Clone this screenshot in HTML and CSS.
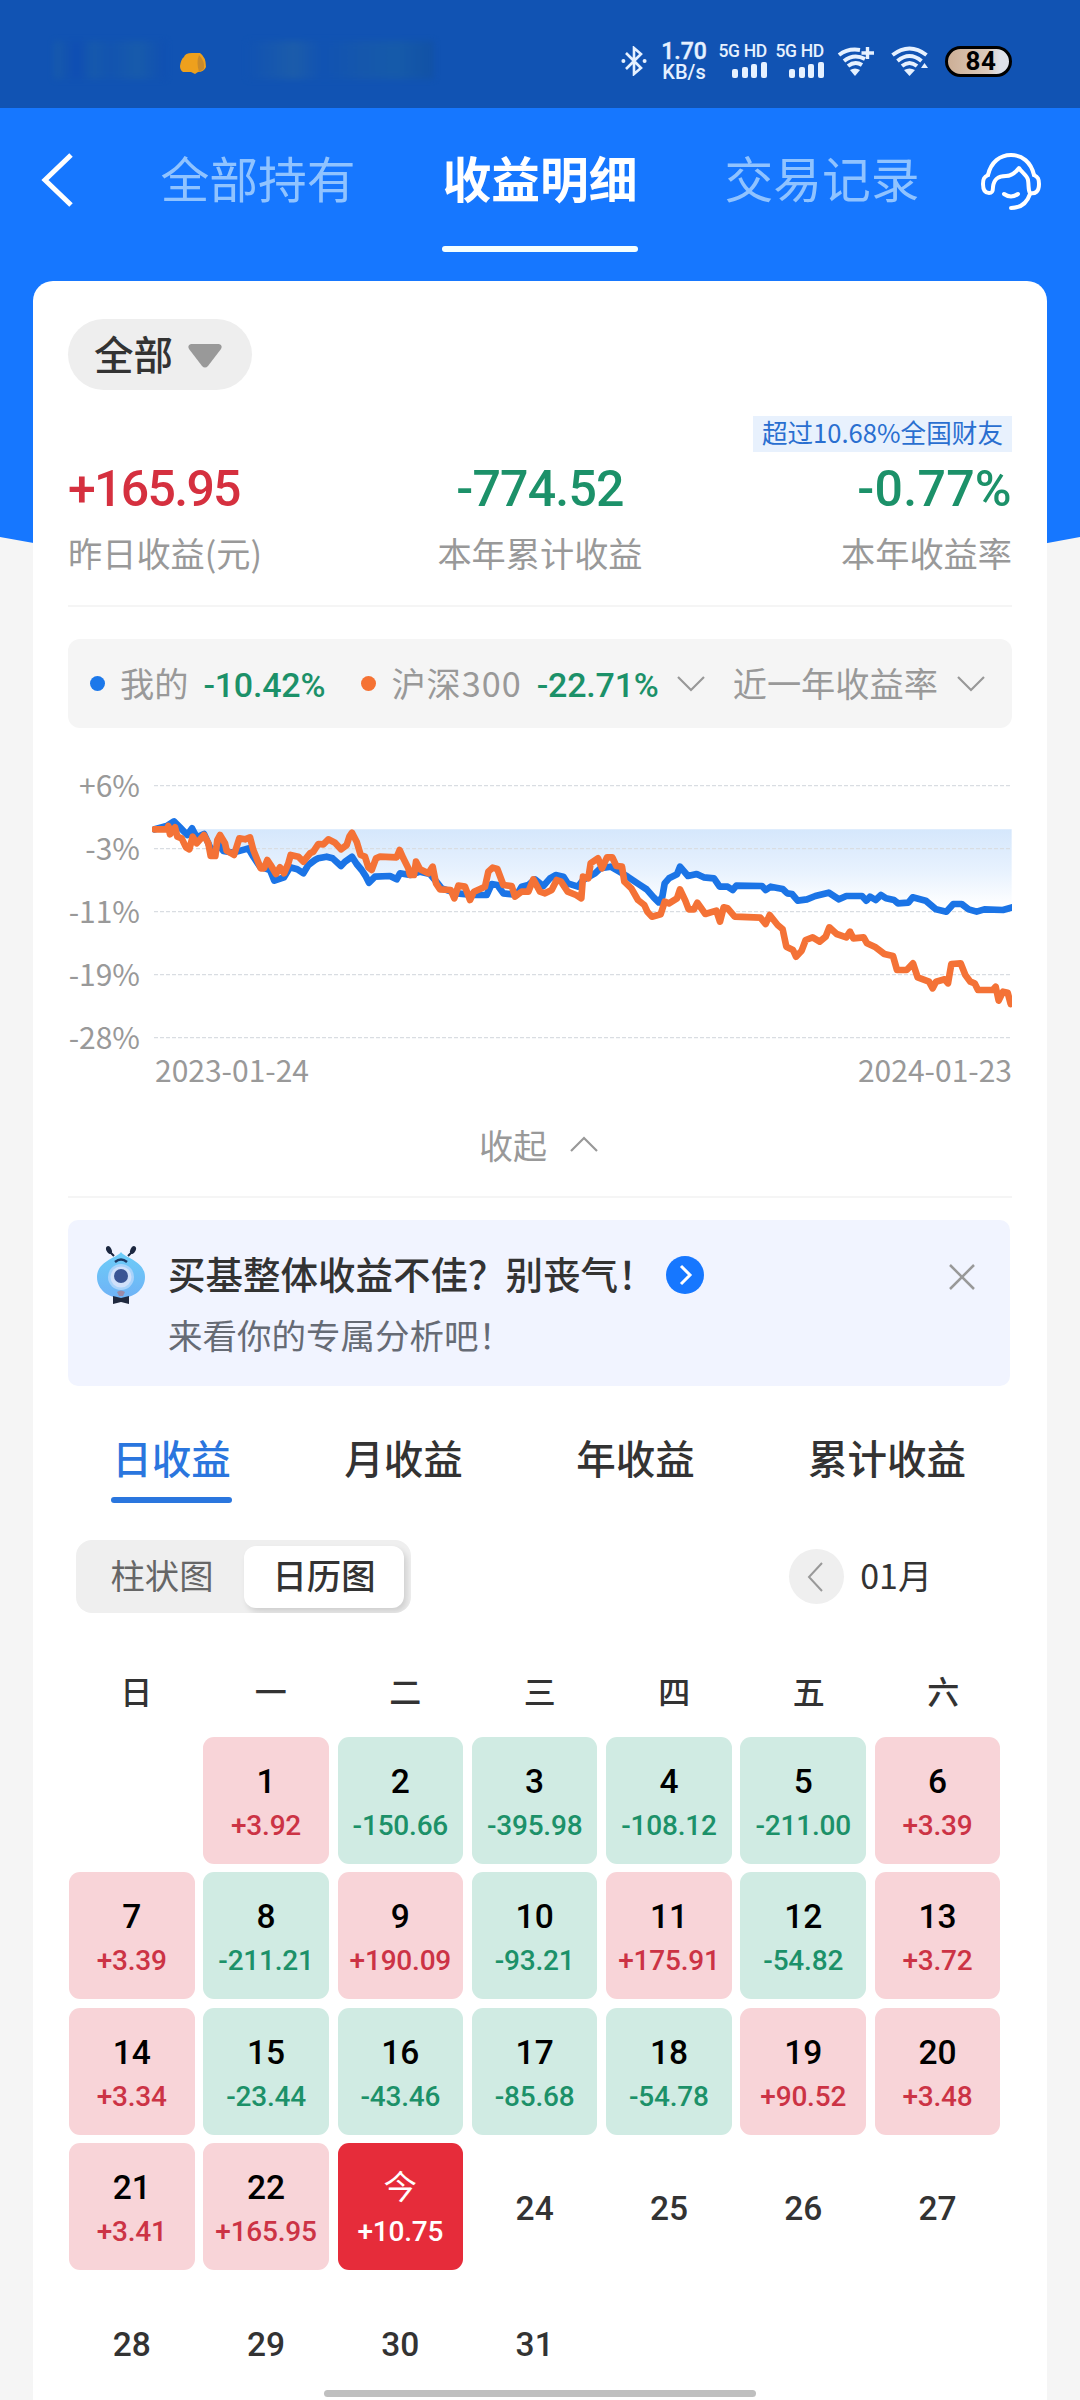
FILE: index.html
```html
<!DOCTYPE html>
<html lang="zh-CN">
<head>
<meta charset="utf-8">
<title>收益明细</title>
<link rel="stylesheet" href="styles.css">
</head>
<body>
<div class="screen">
  <svg class="backdrop" viewBox="0 0 1080 600" aria-hidden="true"><path d="M0 0H1080V537Q540 640 0 537Z" fill="#1677ff"/></svg>

  <header class="status">
    <div class="status-left">
      <span class="smudge smudge-a"></span>
      <svg class="blob" viewBox="0 0 26 21"><path d="M4 4Q5 0 12 0H20Q26 4 26 14Q24 19 18 19L15 21L11 19H3Q0 17 0 13Q1 6 4 4Z" fill="#eea01d"/><path d="M19 2Q25 8 24 16L19 19Q16 9 19 2Z" fill="#c98a2b"/></svg>
      <span class="smudge smudge-b"></span>
    </div>
    <div class="status-right">
      <svg class="bt" viewBox="0 0 26 30" fill="none" stroke="#e6f1ff" stroke-width="2.6"><path d="M5 7L20 22L13 28V2L20 8L5 23"/><circle cx="2.4" cy="15" r="1.2" fill="#e6f1ff" stroke-width="1.6"/><circle cx="23.6" cy="15" r="1.2" fill="#e6f1ff" stroke-width="1.6"/></svg>
      <div class="speed"><b>1.70</b><span>KB/s</span></div>
      <div class="cell"><span>5G HD</span><svg viewBox="0 0 35 16" fill="#e6f1ff"><rect y="7" width="6" height="9" rx="2"/><rect x="10" y="5" width="6" height="11" rx="2"/><rect x="19" y="2" width="6" height="14" rx="2"/><rect x="29" width="6" height="16" rx="2"/></svg></div>
      <div class="cell"><span>5G HD</span><svg viewBox="0 0 35 16" fill="#e6f1ff"><rect y="7" width="6" height="9" rx="2"/><rect x="10" y="5" width="6" height="11" rx="2"/><rect x="19" y="2" width="6" height="14" rx="2"/><rect x="29" width="6" height="16" rx="2"/></svg></div>
      <svg class="wifi" viewBox="0 0 38 30" fill="none" stroke="#e6f1ff" stroke-width="4"><path d="M2 9Q11 2 23 4"/><path d="M7 15Q17 7 28 13"/><path d="M11 20Q18 14.500 25 19"/><path d="M13 24Q18 21 23 24L18 30Z" fill="#e6f1ff" stroke="none"/><path d="M30.500 1V13M24.500 7H37" stroke-width="3.400"/></svg>
      <svg class="wifi wifi-two" viewBox="0 0 38 30" fill="none" stroke="#e6f1ff" stroke-width="4"><path d="M1.500 9Q18.500 -4 35.500 9"/><path d="M6.500 15Q18.500 5 30.500 15"/><path d="M11 20Q18.500 14 26 20"/><path d="M13 24Q18.500 21 24 24L18.500 30Z" fill="#e6f1ff" stroke="none"/><path d="M30 22L33.500 17L37 22Z" fill="#e6f1ff" stroke="none"/></svg>
      <div class="battery">84</div>
    </div>
  </header>

  <nav class="top-nav">
    <svg class="back" viewBox="0 0 32 54" fill="none" stroke="#fff" stroke-width="5"><path d="M30 2L4 27L30 52"/></svg>
    <a class="nav-tab">全部持有</a>
    <a class="nav-tab active">收益明细</a>
    <a class="nav-tab">交易记录</a>
    <svg class="service" viewBox="0 0 60 58" fill="none" stroke="#fff" stroke-width="4" stroke-linecap="round" stroke-linejoin="round"><path d="M7 23C10 10 19 3 30 3S50 10 53 23"/><path d="M7 23C3 25 2 27 2 32C2 38 4 41 8 41C11 41 12 40 12 35C13 26 18 24 25 24C31 24 35 20 38 16C40 20 46 23 47 28C48 34 47 38 49 41C54 42 58 40 58 32C58 27 57 25 53 23"/><path d="M49 42C46 51 40 56 30 56"/><path d="M23 42Q30 47 37 42"/></svg>
  </nav>

  <main class="card">
    <button class="filter">全部<svg viewBox="0 0 34 24"><path d="M3 0H31Q35 1 33 5L20 22Q17 25 14 22L1 5Q-1 1 3 0Z" fill="#999"/></svg></button>

    <section class="stats">
      <div class="stat"><strong class="up">+165.95</strong><span>昨日收益(元)</span></div>
      <div class="stat mid"><strong class="down">-774.52</strong><span>本年累计收益</span></div>
      <div class="stat end"><em>超过10.68%全国财友</em><strong class="down">-0.77%</strong><span>本年收益率</span></div>
    </section>

    <section class="legend">
      <i class="dot blue"></i><span class="l-name">我的</span><b class="l-val v1">-10.42%</b>
      <i class="dot orange"></i><span class="l-name l-index">沪深300</span><b class="l-val v2">-22.71%</b>
      <svg class="chev c1" viewBox="0 0 28 16"><path d="M1 1L14 14L27 1"/></svg>
      <span class="l-name">近一年收益率</span>
      <svg class="chev c2" viewBox="0 0 28 16"><path d="M1 1L14 14L27 1"/></svg>
    </section>

    <section class="chart">
      <div class="y-axis"><span>+6%</span><span>-3%</span><span>-11%</span><span>-19%</span><span>-28%</span></div>
      <svg class="plot" viewBox="276 120 2580 786">
        <defs><linearGradient id="fade" gradientUnits="userSpaceOnUse" x1="0" y1="268" x2="0" y2="500"><stop offset="0" stop-color="#d5e7fc"/><stop offset=".55" stop-color="#e8f2fe"/><stop offset="1" stop-color="#fff"/></linearGradient></defs>
        <path fill="url(#fade)" d="M280 268L382 285L432 282L460 345L490 333L520 338L565 325L580 350L600 380L630 390L643 422L672 412L690 382L712 388L730 400L745 375L775 355L818 355L843 378L876 350L890 372L905 390L927 428L945 410L990 408L1010 418L1020 400L1110 402L1145 445L1190 460L1280 465L1295 432L1312 435L1330 460L1370 465L1385 440L1425 418L1450 438L1487 405L1510 410L1523 430L1554 440L1569 420L1621 385L1652 380L1703 410L1740 435L1796 487L1814 430L1851 403L1860 380L1884 408L1962 415L1979 440L2018 450L2029 437L2168 447L2213 482L2306 458L2337 478L2463 465L2514 490L2558 472L2597 482L2659 515L2680 492L2705 492L2750 515L2855 502V268Z"/>
        <g class="grid"><path d="M282 137H2856M282 326H2856M282 515H2856M282 704H2856M282 893H2856"/></g>
        <path class="line mine" d="M284 268L320 258L342 244L360 262L382 285L396 265L410 292L432 282L445 310L460 345L475 310L490 333L520 338L555 328L565 325L580 350L600 380L630 390L643 422L672 412L690 382L712 388L730 400L745 375L765 360L775 355L800 350L818 355L843 378L855 365L876 350L890 372L905 390L918 410L927 428L945 410L990 408L1010 418L1020 400L1050 405L1080 395L1110 402L1125 420L1145 445L1190 460L1240 465L1280 465L1295 432L1312 435L1330 460L1370 465L1385 440L1405 435L1425 418L1450 438L1470 415L1487 405L1510 410L1523 430L1554 440L1569 420L1605 400L1621 385L1652 380L1678 395L1703 410L1740 435L1760 448L1781 472L1796 487L1807 470L1814 430L1827 415L1851 403L1860 380L1884 408L1910 402L1931 412L1962 415L1979 440L2003 440L2018 450L2029 437L2106 438L2117 450L2132 440L2168 447L2182 460L2196 462L2213 482L2241 478L2266 468L2306 458L2337 478L2359 468L2406 468L2419 482L2430 470L2447 480L2463 465L2478 475L2502 480L2514 490L2545 488L2558 472L2597 482L2628 508L2659 515L2680 492L2705 492L2726 508L2750 515L2773 508L2829 510L2858 502"/>
        <path class="line index" d="M284 268L320 268L325 258L330 283L345 262L352 290L365 295L378 322L388 328L398 290L410 310L432 285L445 310L452 348L466 348L472 300L480 285L495 310L500 332L522 345L538 295L555 298L570 292L580 330L590 355L602 385L612 385L622 360L632 375L648 402L660 382L672 400L685 370L692 345L715 350L730 365L750 340L760 335L775 312L790 313L805 298L825 308L843 328L860 315L868 290L876 278L890 305L902 345L915 350L925 382L935 390L948 355L960 350L1010 352L1019 330L1030 355L1045 385L1050 405L1062 405L1068 365L1080 388L1105 400L1118 380L1128 430L1140 448L1172 450L1183 475L1195 437L1215 440L1230 480L1242 455L1275 440L1285 395L1298 383L1312 387L1330 435L1355 438L1365 470L1385 455L1405 455L1420 418L1440 455L1455 460L1475 450L1490 420L1503 425L1523 455L1548 465L1564 475L1569 410L1585 415L1592 370L1614 355L1626 385L1641 352L1657 352L1669 378L1686 380L1693 425L1714 445L1734 480L1753 495L1762 515L1776 530L1802 523L1814 485L1827 490L1851 475L1860 448L1876 482L1886 508L1902 508L1912 488L1936 522L1969 512L1980 545L1991 502L2003 505L2024 530L2101 533L2117 552L2129 525L2153 555L2168 568L2179 620L2199 630L2208 650L2225 632L2237 600L2258 592L2279 605L2297 590L2308 562L2330 582L2359 592L2370 575L2380 595L2411 592L2421 610L2447 622L2473 642L2499 648L2511 690L2540 690L2559 670L2573 712L2607 725L2618 745L2628 725L2654 718L2664 730L2674 672L2702 670L2716 705L2731 725L2744 730L2754 750L2798 750L2807 740L2816 782L2829 755L2843 758L2852 792"/>
      </svg>
      <div class="x-axis"><span>2023-01-24</span><span>2024-01-23</span></div>
    </section>

    <div class="collapse">收起<svg class="chev" viewBox="0 0 28 16"><path d="M1 15L14 2L27 15"/></svg></div>

    <section class="banner">
      <svg class="mascot" viewBox="0 0 50 58"><defs><linearGradient id="body" x1="0" y1="0" x2="0" y2="1"><stop offset="0" stop-color="#6ccdf8"/><stop offset="1" stop-color="#6fb2f6"/></linearGradient></defs><path d="M11 3L18 10M39 3L32 10" stroke="#1c2740" stroke-width="2"/><ellipse cx="13" cy="4" rx="2.600" ry="4" transform="rotate(-25 13 4)" fill="#1c2740"/><ellipse cx="37" cy="4" rx="2.600" ry="4" transform="rotate(25 37 4)" fill="#1c2740"/><path d="M25 6C29 12 49 15 49 31C49 44 37 52 25 52S1 44 1 31C1 15 21 12 25 6Z" fill="url(#body)"/><path d="M19 16Q25 11 31 16" fill="none" stroke="#1c3a66" stroke-width="2.400"/><circle cx="25" cy="31" r="13" fill="#a9d3fb"/><circle cx="25" cy="31" r="10.500" fill="#d0e0fa"/><circle cx="25" cy="30" r="7" fill="#3a5494"/><path d="M21 46Q25 43 29 46L27 50H23Z" fill="#9b8aa8"/><path d="M17 50L25 52L33 50V58L25 56L17 58Z" fill="#20293f"/></svg>
      <div class="banner-text"><h2>买基整体收益不佳？别丧气！<svg viewBox="0 0 38 38"><circle cx="19" cy="19" r="19" fill="#1677ff"/><path d="M15 10L24 19L15 28" fill="none" stroke="#fff" stroke-width="3"/></svg></h2><p>来看你的专属分析吧！</p></div>
      <svg class="close" viewBox="0 0 28 28"><path d="M2 2L26 26M26 2L2 26" stroke="#999" stroke-width="2.500"/></svg>
    </section>

    <nav class="period"><a class="on">日收益</a><a>月收益</a><a>年收益</a><a>累计收益</a></nav>

    <div class="tools">
      <div class="segment"><span>柱状图</span><span class="sel">日历图</span></div>
      <div class="month"><i><svg viewBox="0 0 16 30"><path d="M15 1L2 15L15 29" fill="none" stroke="#999" stroke-width="2"/></svg></i><span>01月</span></div>
    </div>

    <div class="week"><span>日</span><span>一</span><span>二</span><span>三</span><span>四</span><span>五</span><span>六</span></div>
    <div class="days">
      <div></div>
      <div class="g"><b>1</b><span>+3.92</span></div>
      <div class="l"><b>2</b><span>-150.66</span></div>
      <div class="l"><b>3</b><span>-395.98</span></div>
      <div class="l"><b>4</b><span>-108.12</span></div>
      <div class="l"><b>5</b><span>-211.00</span></div>
      <div class="g"><b>6</b><span>+3.39</span></div>
      <div class="g"><b>7</b><span>+3.39</span></div>
      <div class="l"><b>8</b><span>-211.21</span></div>
      <div class="g"><b>9</b><span>+190.09</span></div>
      <div class="l"><b>10</b><span>-93.21</span></div>
      <div class="g"><b>11</b><span>+175.91</span></div>
      <div class="l"><b>12</b><span>-54.82</span></div>
      <div class="g"><b>13</b><span>+3.72</span></div>
      <div class="g"><b>14</b><span>+3.34</span></div>
      <div class="l"><b>15</b><span>-23.44</span></div>
      <div class="l"><b>16</b><span>-43.46</span></div>
      <div class="l"><b>17</b><span>-85.68</span></div>
      <div class="l"><b>18</b><span>-54.78</span></div>
      <div class="g"><b>19</b><span>+90.52</span></div>
      <div class="g"><b>20</b><span>+3.48</span></div>
      <div class="g"><b>21</b><span>+3.41</span></div>
      <div class="g"><b>22</b><span>+165.95</span></div>
      <div class="today"><b>今</b><span>+10.75</span></div>
      <div><b>24</b></div><div><b>25</b></div><div><b>26</b></div><div><b>27</b></div>
      <div><b>28</b></div><div><b>29</b></div><div><b>30</b></div><div><b>31</b></div>
    </div>
  </main>
  <div class="home-bar"></div>
</div>
</body>
</html>
```
FILE: styles.css
```css
* { box-sizing: border-box; margin: 0; padding: 0; }
html, body { width: 1080px; height: 2400px; overflow: hidden; }
body { font-family: "Noto Sans CJK SC", sans-serif; color: #333; background: #f5f5f5; }
svg { display: block; flex: none; }
i, em { font-style: normal; }
.screen { position: relative; height: 2400px; overflow: hidden; isolation: isolate; }
.backdrop { position: absolute; z-index: -1; left: 0; top: 0; width: 1080px; height: 600px; }

.status { height: 108px; display: flex; justify-content: space-between; background: #1153b3; color: #e6f1ff; padding: 0 68px 0 54px; }
.status-left { display: flex; align-items: center; padding-top: 12px; }
.smudge { height: 38px; opacity: .55; filter: blur(3px); }
.smudge-a { width: 112px; background: linear-gradient(90deg, #1d62a6, #0d49b5 20%, #1a5fa8 35%, #1455ae 50%, #1d62a6 75%, #0f4db3); }
.smudge-b { width: 186px; background: linear-gradient(90deg, #1153b3, #2564a4 25%, #1153b3 40%, #195ba8 60%, #1a61a3 80%, #12509c); }
.blob { width: 26px; height: 21px; margin: 6px 42px 0 14px; }
.status-right { display: flex; align-items: center; padding-top: 14px; font-family: Roboto, sans-serif; }
.bt { width: 26px; height: 30px; margin-right: 14px; }
.speed { width: 46px; display: flex; flex-direction: column; align-items: center; margin-right: 12px; }
.speed b { font-size: 23px; line-height: 20px; font-weight: 500; -webkit-text-stroke: .4px; }
.speed span { font-size: 20px; line-height: 18px; font-weight: 500; padding-top: 1px; }
.cell { width: 48px; margin-right: 9px; display: flex; flex-direction: column; align-items: flex-end; gap: 3px; white-space: nowrap; }
.cell span { font-size: 17.5px; line-height: 15px; font-weight: 500; letter-spacing: -.3px; }
.cell svg { width: 35px; height: 16px; }
.wifi { width: 38px; height: 30px; margin-left: 4px; }
.wifi-two { margin: 0 16px; }
.battery { width: 67px; height: 31px; border: 3px solid #000; border-radius: 16px; background: linear-gradient(90deg, #cdaf96, #dccabb 65%, #dfe1e8 85%); color: #000; font: 700 26px/25px Roboto, sans-serif; text-align: center; padding-left: 5px; letter-spacing: .5px; }

.top-nav { height: 173px; display: flex; align-items: flex-start; padding: 34px 36px 0 41px; color: #90c3ff; }
.back { width: 32px; height: 54px; margin: 11px 87px 0 0; }
.nav-tab { width: 196px; height: 108px; font-size: 48.8px; line-height: 70px; white-space: nowrap; text-align: center; margin-right: 86px; }
.nav-tab + .nav-tab + .nav-tab { margin-right: 61px; }
.active { color: #fff; font-weight: 700; }
.active::after { content: ""; display: block; height: 6px; margin-top: 34px; border-radius: 3px; background: #f4ffff; }
.service { width: 60px; height: 58px; margin-top: 10px; }

.card { height: 2119px; margin: 0 33px; padding: 38px 35px 0; background: #fff; border-radius: 20px 20px 0 0; }
.filter { display: flex; align-items: center; gap: 15px; width: 184px; height: 71px; padding: 0 0 4px 26px; border: 0; border-radius: 36px; background: #eee; color: #333; font: 500 39.5px/67px "Noto Sans CJK SC", sans-serif; }
.filter svg { width: 34px; height: 24px; margin-top: 6px; }

.stats { height: 217px; display: grid; grid-template-columns: repeat(3, 1fr); border-bottom: 2px solid #f5f5f5; }
.stat { display: flex; flex-direction: column; padding-top: 67px; }
.stat strong { font: 500 50px/64px Roboto, sans-serif; letter-spacing: -1.7px; }
.stat span { font-size: 34.2px; line-height: 50px; color: #999; margin-top: 6px; white-space: nowrap; }
.mid { align-items: center; }
.stat.mid strong { letter-spacing: -.8px; }
.end { align-items: flex-end; padding-top: 26px; }
.stat.end strong { letter-spacing: .3px; }
.end em { height: 36px; margin-bottom: 5px; padding: 0 9px; font-size: 25.6px; line-height: 32px; color: #2a6fd0; background: #e8f1fd; white-space: nowrap; }
.up { color: #d5303f; }
.down { color: #1c9169; }

.legend { height: 89px; margin-top: 32px; padding-left: 22px; display: flex; align-items: center; background: #f5f5f5; border-radius: 12px; white-space: nowrap; }
.dot { flex: none; width: 15px; height: 15px; border-radius: 50%; margin-right: 15px; }
.blue { background: #1c78ea; }
.orange { background: #f57233; }
.l-name { flex: none; font-size: 34.2px; line-height: 50px; color: #999; padding-bottom: 3px; }
.l-index { letter-spacing: 1px; }
.l-val { flex: none; font: 500 34px/50px Roboto, sans-serif; letter-spacing: -.2px; color: #1c9169; padding-top: 2px; }
.v1 { width: 173px; padding-left: 15px; }
.v2 { width: 141px; padding-left: 15px; }
.chev { width: 28px; height: 16px; fill: none; stroke: #999; stroke-width: 2.2; }
.c1 { margin-right: 28px; margin-left: 14px; }
.c2 { margin-left: 19px; }

.chart { display: grid; grid-template-columns: 71px 860px; column-gap: 13px; margin-top: 52px; grid-template-rows: 262px 50px; }
.y-axis { display: flex; flex-direction: column; gap: 23px; margin: -16px -1px 0 0; align-items: flex-end; font-size: 30px; line-height: 40px; color: #999; white-space: nowrap; }
.plot { width: 860px; height: 262px; }
.grid { fill: none; stroke: #d9dde2; stroke-width: 4; stroke-dasharray: 12 6; }
.line { fill: none; stroke-width: 20; stroke-linejoin: round; stroke-linecap: round; }
.mine { stroke: #1b74e6; }
.index { stroke: #f47236; }
.x-axis { grid-column: 2; display: flex; justify-content: space-between; padding: 5px 0 0 3px; font-size: 30px; line-height: 44px; color: #999; }

.collapse { height: 106px; padding-right: 3px; display: flex; align-items: center; justify-content: center; gap: 23px; border-bottom: 2px solid #f5f5f5; font-size: 34px; color: #999; }

.banner { width: 942px; height: 166px; margin-top: 22px; padding: 22px 34px 0 28px; display: flex; align-items: flex-start; background: #f1f4ff; border-radius: 10px; }
.mascot { width: 50px; height: 58px; margin: 4px 22px 0 0; }
.banner-text { flex: 1; }
.banner h2 { display: flex; align-items: center; height: 60px; font-size: 37.5px; font-weight: 500; white-space: nowrap; }
.banner h2 svg { width: 38px; height: 38px; margin: 6px 0 0 10px; }
.banner p { font-size: 34.5px; line-height: 60px; padding-top: 2px; color: #666b75; }
.close { width: 28px; height: 28px; margin-top: 21px; }

.period { height: 117px; display: flex; padding: 36px 0 0 43px; font-size: 39.5px; line-height: 70px; font-weight: 500; white-space: nowrap; }
.period a { flex: none; width: 121px; margin-right: 111px; text-align: center; }
.period a:last-child { width: 160px; margin-right: 0; }
.on { color: #2a76de; }
.on::after { content: ""; display: block; height: 6px; border-radius: 3px; background: #2a76de; margin-top: 5px; }

.tools { display: flex; justify-content: space-between; align-items: center; margin: 37px 80px 0 8px; height: 73px; }
.segment { display: grid; grid-template-columns: 168px 160px; width: 335px; height: 73px; padding: 6px 0; border-radius: 16px; background: #efefef; font-size: 34.3px; line-height: 57px; color: #666; text-align: center; overflow: hidden; }
.segment span:first-child { padding-left: 4px; }
.sel { height: 62px; border-radius: 12px; background: #fff; color: #333; font-weight: 500; box-shadow: 3px 4px 6px #0002; }
.month { display: flex; align-items: center; gap: 16px; font-size: 34px; }
.month span { padding-bottom: 4px; }
.month i { width: 55px; height: 55px; display: grid; place-items: center; padding-right: 3px; border-radius: 50%; background: #efefef; }
.month i svg { width: 16px; height: 30px; }

.week { margin: 53px 0 0 1px; display: grid; grid-template-columns: repeat(7, 134.5px); height: 71px; font-size: 32px; line-height: 48px; font-weight: 500; text-align: center; }
.days { margin-left: 1px; display: grid; grid-template-columns: repeat(7, 125.5px); grid-auto-rows: 126.6px; gap: 8.9px 8.8px; font-family: Roboto, "Noto Sans CJK SC", sans-serif; }
.days div { border-radius: 11px; display: flex; flex-direction: column; align-items: center; justify-content: center; padding-top: 5px; }
.days b { font-size: 33.5px; line-height: 46px; font-weight: 500; }
.days span { font-size: 28px; line-height: 42px; font-weight: 500; letter-spacing: -.2px; }
.g { background: #f8d4d8; color: #cc3345; }
.l { background: #d0ebe3; color: #1c9169; }
.g b, .l b { color: #000; }
.today { background: #e62c3a; color: #fff; }
.today b { font-weight: 400; }
.home-bar { position: absolute; left: 324px; top: 2390px; width: 432px; height: 7px; border-radius: 4px; background: #bfbfbf; }
```
